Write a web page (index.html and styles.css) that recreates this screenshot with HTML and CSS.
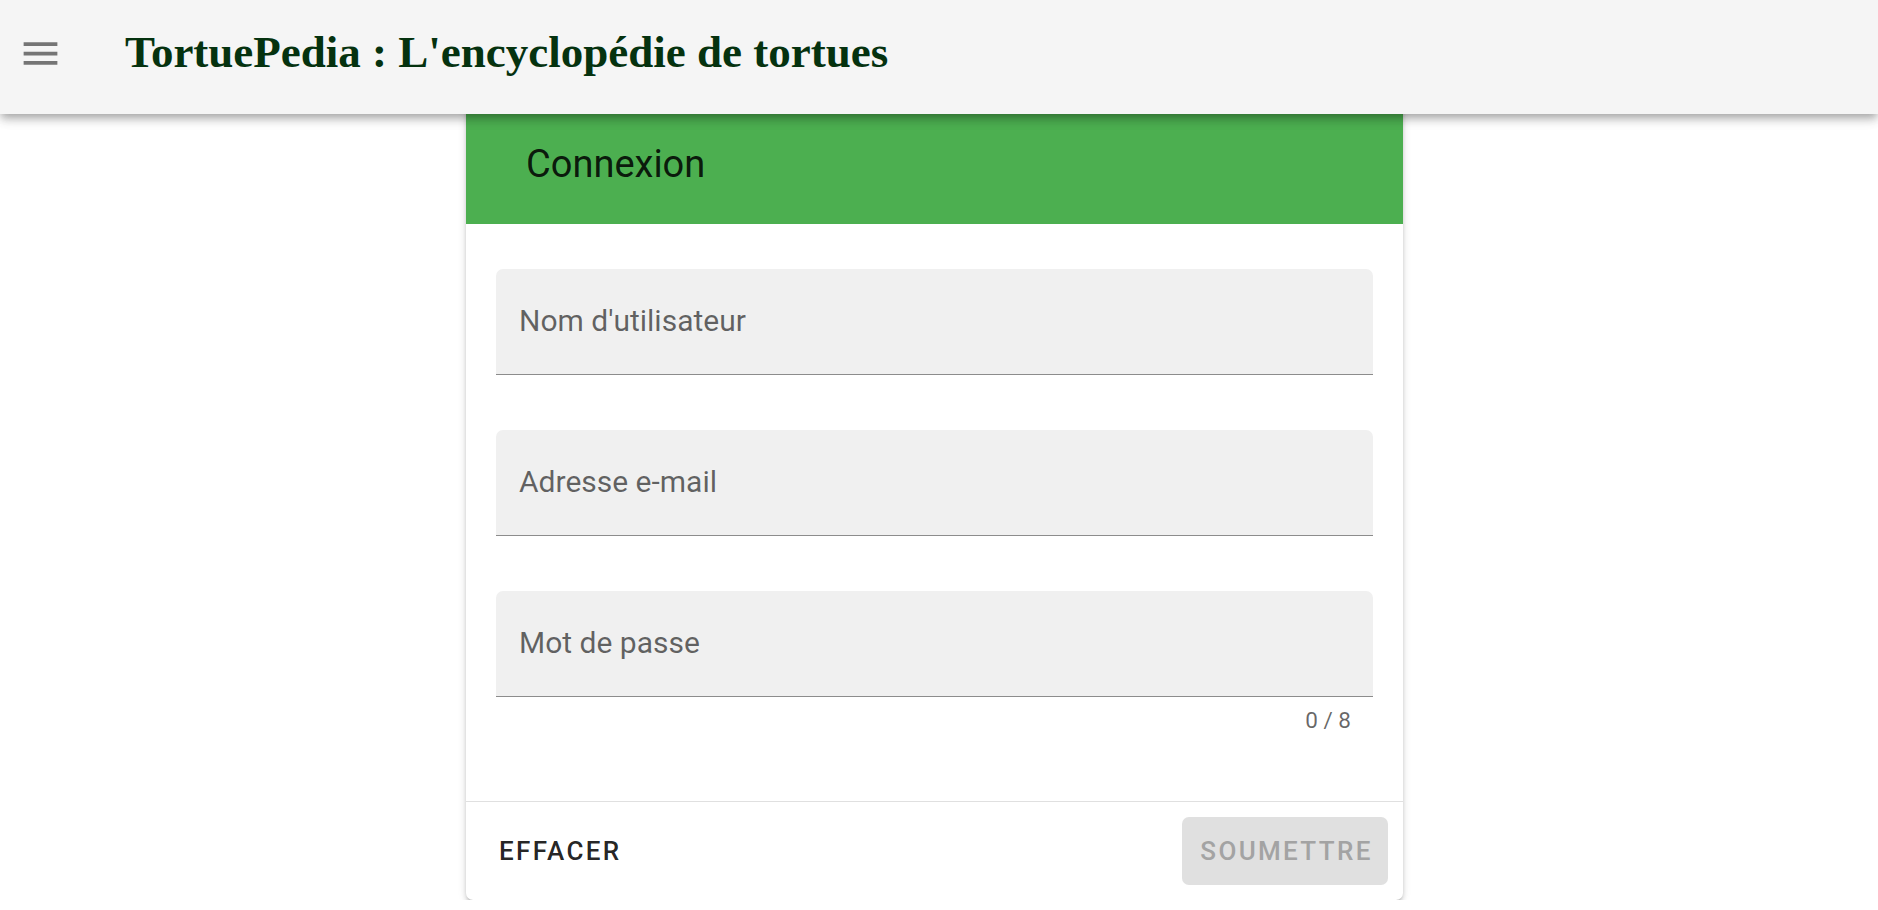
FILE: index.html
```html
<!DOCTYPE html>
<html lang="fr">
<head>
<meta charset="utf-8">
<title>TortuePedia</title>
<link rel="stylesheet" href="styles.css">
</head>
<body>
<header class="app-bar">
  <button class="menu-btn" aria-label="Menu">
    <svg viewBox="0 0 24 24" width="45" height="45"><path d="M3 18h18v-2H3v2zm0-5h18v-2H3v2zm0-7v2h18V6H3z"/></svg>
  </button>
  <h1 class="app-title">TortuePedia : L'encyclopédie de tortues</h1>
</header>
<main class="main">
  <section class="card">
    <div class="card-title">Connexion</div>
    <form class="card-body">
      <div class="field-group">
        <div class="field"><span class="field-label">Nom d'utilisateur</span></div>
        <div class="field-details"></div>
      </div>
      <div class="field-group">
        <div class="field"><span class="field-label">Adresse e-mail</span></div>
        <div class="field-details"></div>
      </div>
      <div class="field-group">
        <div class="field"><span class="field-label">Mot de passe</span></div>
        <div class="field-details"><span class="counter">0 / 8</span></div>
      </div>
    </form>
    <div class="card-actions">
      <button class="btn btn-text" type="button">Effacer</button>
      <button class="btn btn-disabled" type="button" disabled>Soumettre</button>
    </div>
  </section>
</main>
</body>
</html>
```

FILE: styles.css
```css
html, body {
  margin: 0;
  padding: 0;
  background: #ffffff;
  font-family: Roboto, "Noto Sans", Arial, sans-serif;
}

.app-bar {
  position: relative;
  z-index: 2;
  height: 114px;
  background: #f5f5f5;
  display: flex;
  align-items: flex-start;
  padding-left: 18px;
  box-sizing: border-box;
  box-shadow: 0 4px 8px -2px rgba(0,0,0,0.25), 0 7px 9px 0 rgba(0,0,0,0.12), 0 2px 16px 0 rgba(0,0,0,0.08);
}

.menu-btn {
  margin: 31px 0 0 0;
  padding: 0;
  border: 0;
  background: transparent;
  width: 45px;
  height: 45px;
  display: block;
  cursor: pointer;
}

.menu-btn svg {
  display: block;
  fill: #757575;
}

.app-title {
  margin: 30px 0 0 62px;
  font-family: "Liberation Serif", "Times New Roman", serif;
  font-weight: bold;
  font-size: 45px;
  line-height: 45px;
  color: #05320f;
  white-space: nowrap;
}

.main {
  display: flex;
  justify-content: center;
  padding-right: 9px;
}

.card {
  width: 937px;
  margin-top: -10px;
  background: #ffffff;
  border-radius: 0 0 7px 7px;
  box-shadow: 0 3px 3px -2px rgba(0,0,0,0.22), 0 3px 5px 0 rgba(0,0,0,0.14), 0 1px 10px 0 rgba(0,0,0,0.10);
  overflow: hidden;
}

.card-title {
  height: 120px;
  background: #4caf50;
  display: flex;
  align-items: center;
  padding-left: 60px;
  font-size: 38px;
  font-weight: 400;
  color: rgba(0,0,0,0.87);
}

.card-body {
  padding: 45px 30px 49px;
  margin: 0;
}

.field {
  height: 106px;
  box-sizing: border-box;
  background: #f0f0f0;
  border-radius: 7px 7px 0 0;
  border-bottom: 1.5px solid #8c8c8c;
  padding: 37px 23px 0;
}

.field-label {
  display: block;
  font-size: 30px;
  line-height: 30px;
  color: rgba(0,0,0,0.6);
}

.field-details {
  height: 55px;
  box-sizing: border-box;
  padding: 12px 22px 0;
  text-align: right;
}

.counter {
  font-size: 22.5px;
  line-height: 22.5px;
  color: rgba(0,0,0,0.6);
}

.card-actions {
  border-top: 1px solid #e0e0e0;
  padding: 15px;
  display: flex;
  justify-content: space-between;
  align-items: center;
}

.btn {
  height: 68px;
  border: 0;
  border-radius: 7px;
  font-family: Roboto, "Noto Sans", Arial, sans-serif;
  font-size: 26px;
  font-weight: 500;
  letter-spacing: 0.09em;
  text-transform: uppercase;
  background: transparent;
}

.btn-text {
  padding: 0 18px;
  color: rgba(0,0,0,0.87);
}

.btn-disabled {
  width: 206px;
  padding: 0 0 0 3px;
  background: #e0e0e0;
  color: #a3a3a3;
}
```
